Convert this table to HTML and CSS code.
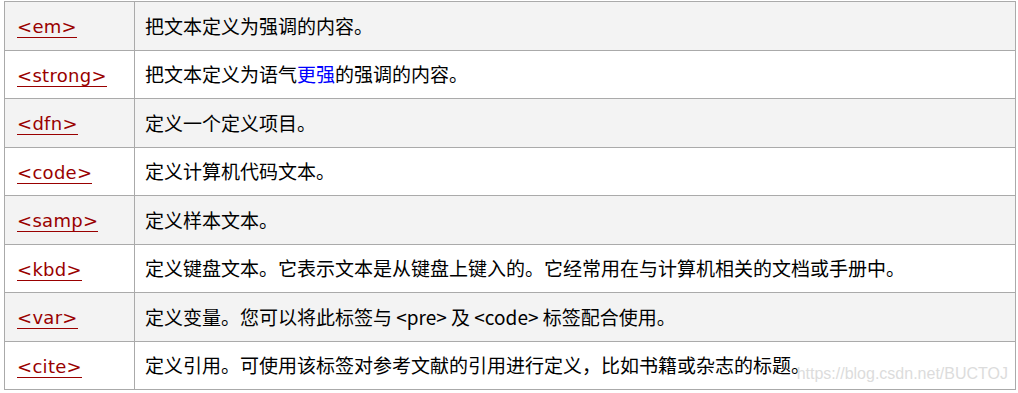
FILE: index.html
```html
<!DOCTYPE html>
<html lang="zh">
<head>
<meta charset="utf-8">
<title>Phrase tags</title>
<link rel="stylesheet" href="styles.css">
</head>
<body>
<div class="wrap">
<table class="ref">
<tbody>
<tr><td class="tag"><a href="#">&lt;em&gt;</a></td><td class="desc">把文本定义为强调的内容。</td></tr>
<tr><td class="tag"><a href="#">&lt;strong&gt;</a></td><td class="desc">把文本定义为语气<span class="hl">更强</span>的强调的内容。</td></tr>
<tr><td class="tag"><a href="#">&lt;dfn&gt;</a></td><td class="desc">定义一个定义项目。</td></tr>
<tr><td class="tag"><a href="#">&lt;code&gt;</a></td><td class="desc">定义计算机代码文本。</td></tr>
<tr><td class="tag"><a href="#">&lt;samp&gt;</a></td><td class="desc">定义样本文本。</td></tr>
<tr><td class="tag"><a href="#">&lt;kbd&gt;</a></td><td class="desc">定义键盘文本。它表示文本是从键盘上键入的。它经常用在与计算机相关的文档或手册中。</td></tr>
<tr><td class="tag"><a href="#">&lt;var&gt;</a></td><td class="desc">定义变量。您可以将此标签与 &lt;pre&gt; 及 &lt;code&gt; 标签配合使用。</td></tr>
<tr><td class="tag"><a href="#">&lt;cite&gt;</a></td><td class="desc">定义引用。可使用该标签对参考文献的引用进行定义，比如书籍或杂志的标题。</td></tr>
</tbody>
</table>
<span class="watermark">https://blog.csdn.net/BUCTOJ</span>
</div>
</body>
</html>
```
FILE: styles.css
```css
html, body {
  margin: 0;
  padding: 0;
  background: #ffffff;
}
body {
  padding: 1px 2px 0 4px;
}
.wrap {
  position: relative;
  width: 1012px;
}
.ref {
  border-collapse: collapse;
  width: 1012px;
  table-layout: fixed;
}
.ref tr {
  height: 48.5px;
}
.ref tr:nth-child(odd) {
  background: #f3f3f3;
}
.ref td {
  border: 1px solid #aaaaaa;
  padding: 0 10px;
  vertical-align: middle;
}
.ref td.tag {
  width: 107px;
  padding-left: 12px;
  padding-right: 10px;
}
.tag a {
  font-family: "DejaVu Sans", Verdana, sans-serif;
  font-size: 18px;
  letter-spacing: 0.3px;
  color: #990000;
  text-decoration: none;
  border-bottom: 1px solid #990000;
  position: relative;
  top: 1px;
}
.desc {
  font-family: "Noto Sans CJK SC", "Microsoft YaHei", sans-serif;
  font-size: 19px;
  color: #000000;
  line-height: 24px;
}
.hl {
  color: #0000ff;
}
.watermark {
  position: absolute;
  right: 8px;
  bottom: 7px;
  font-family: "Liberation Sans", Arial, sans-serif;
  font-size: 16px;
  color: #dcdcdc;
}
```
